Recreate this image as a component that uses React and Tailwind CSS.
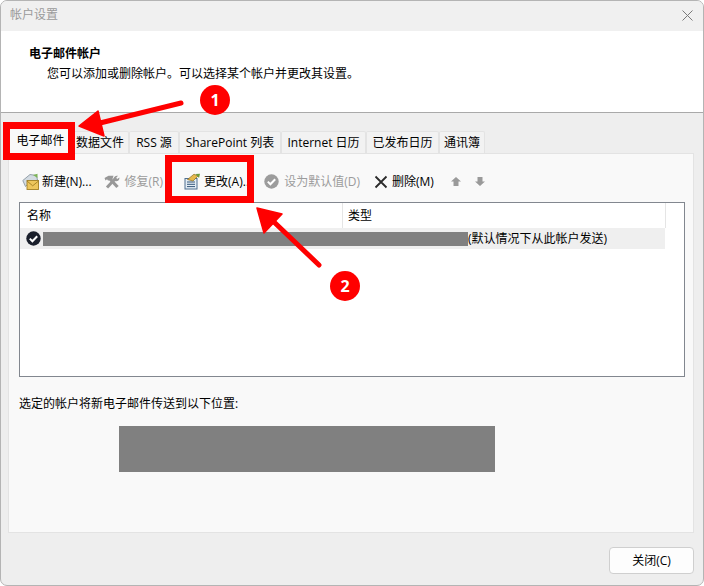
const tabs = [
  { label: "数据文件", w: "w-[58px]" },
  { label: "RSS 源", w: "w-[50px]" },
  { label: "SharePoint 列表", w: "w-[102px]" },
  { label: "Internet 日历", w: "w-[85px]" },
  { label: "已发布日历", w: "w-[73px]" },
  { label: "通讯簿", w: "w-[46px]" },
];

const MailIcon = () => (
  <svg width="17" height="17" viewBox="0 0 17 17">
    <path d="M.8 7.5 L8 1.5 L14.5 2.5 L15.5 7 L7 10 L3.5 13.5 Z" fill="#d3dbe2" stroke="#8b98a3" strokeWidth="0.9" />
    <path d="M11 2 L15.5 .8 L15.5 5 Z" fill="#7db356" />
    <rect x="5" y="7.5" width="11.5" height="9" fill="#eec65c" stroke="#a37f24" strokeWidth="0.9" />
    <path d="M5 8 L10.7 12.8 L16.5 8" fill="none" stroke="#a37f24" strokeWidth="0.9" />
  </svg>
);

const ToolsIcon = () => (
  <svg width="16" height="14" viewBox="0 0 16 14" fill="#989898">
    <path d="M.5 3 L4.5 .8 L9.5 .8 L8 5.5 L4 5.5 L3 4.2 L1.5 5.5 Z" />
    <path d="M6.5 4.5 L13.5 12" stroke="#989898" strokeWidth="3.2" />
    <path d="M3 12.5 L11 4" stroke="#989898" strokeWidth="3" />
    <path d="M9.5 4 C9.5 1.5 12 .2 14 .8 L12.2 2.8 L13.2 4 L15.4 2.4 C15.8 4.8 13.5 7 11 6 Z" />
  </svg>
);

const EditIcon = () => (
  <svg width="17" height="17" viewBox="0 0 17 17">
    <rect x="1" y="5.5" width="12" height="10.5" fill="#e4edf5" stroke="#4f6f8f" strokeWidth="1" />
    <path d="M3 9 H11 M3 11.3 H11 M3 13.6 H11" stroke="#35577a" strokeWidth="1" />
    <path d="M3.5 6.5 L10 1.2 L14 3 L9 8 Z" fill="#e7b94d" stroke="#8a6b1f" strokeWidth="0.7" />
    <path d="M11.5 1 L16 .8 L15 5 Z" fill="#6d9a3c" />
  </svg>
);

const CheckCircleIcon = ({ bg = "#9c9c9c" }) => (
  <svg width="15" height="15" viewBox="0 0 15 15">
    <circle cx="7.5" cy="7.5" r="7.2" fill={bg} />
    <path d="M3.8 7.6 L6.4 10.2 L11.2 5.2" fill="none" stroke="#fff" strokeWidth="2" />
  </svg>
);

const XIcon = () => (
  <svg width="14" height="14" viewBox="0 0 14 14">
    <path d="M1.5 1.5 L12.5 12.5 M12.5 1.5 L1.5 12.5" stroke="#2b2b2b" strokeWidth="1.8" />
  </svg>
);

const UpIcon = () => (
  <svg width="10" height="9" viewBox="0 0 10 9" fill="#9a9a9a">
    <path d="M5 0 L10 4.5 L7.5 4.5 L7.5 9 L2.5 9 L2.5 4.5 L0 4.5 Z" />
  </svg>
);

const DownIcon = () => (
  <svg width="10" height="9" viewBox="0 0 10 9" fill="#9a9a9a">
    <path d="M5 9 L10 4.5 L7.5 4.5 L7.5 0 L2.5 0 L2.5 4.5 L0 4.5 Z" />
  </svg>
);

const Badge = ({ n, className }) => (
  <div
    className={`absolute w-[30px] h-[30px] rounded-full bg-[#ff0000] text-white font-bold text-[16px] flex items-center justify-center ${className}`}
  >
    {n}
  </div>
);

const App = () => {
  return (
    <div
      className="relative w-[704px] h-[586px] overflow-hidden bg-white text-[12px] text-black"
      style={{ fontFamily: '"Open Sans", "Noto Sans CJK SC", sans-serif' }}
    >
      <div className="w-full h-full flex flex-col bg-[#eeeeee] border border-[#b4b4b4] rounded-t-[7px] rounded-b-[7px] overflow-hidden">
        {/* title bar */}
        <div className="h-[30px] shrink-0 bg-[#f0f0f0] flex items-center justify-between pl-[9px] pr-[10px] pb-[2px] text-[#9a9a9a]">
          <span>帐户设置</span>
          <svg width="11" height="11" viewBox="0 0 11 11">
            <path d="M.5 .5 L10.5 10.5 M10.5 .5 L.5 10.5" stroke="#7a7a7a" strokeWidth="1" />
          </svg>
        </div>

        {/* header */}
        <div className="h-[82px] shrink-0 bg-white border-b border-[#a9a9a9] pl-[28px] pt-[13px]">
          <div className="font-bold leading-[20px]">电子邮件帐户</div>
          <div className="pl-[18px] leading-[20px]">
            您可以添加或删除帐户。可以选择某个帐户并更改其设置。
          </div>
        </div>

        {/* tabs */}
        <div className="flex-1 flex flex-col pl-[7px] pr-[9px] pt-[17px]">
          <div className="flex items-end h-[23px] shrink-0 pl-[2px] relative z-10">
            <div className="w-[61px] h-[25px] bg-[#f9f9f9] flex items-center justify-center">
              电子邮件
            </div>
            {tabs.map((t) => (
              <div
                key={t.label}
                className={`${t.w} h-[22px] flex items-center justify-center bg-[#f2f2f2] border border-b-0 border-[#e3e3e3] rounded-t-[2px] whitespace-nowrap`}
              >
                {t.label}
              </div>
            ))}
          </div>

          {/* panel */}
          <div className="h-[380px] shrink-0 bg-[#f9f9f9] border border-[#e3e3e3] pl-[10px] flex flex-col">
            {/* toolbar */}
            <div className="h-[48px] shrink-0 flex items-center pl-[3px] pt-[7px] whitespace-nowrap">
              <MailIcon />
              <span className="ml-[3px]">新建(N)...</span>
              <span className="ml-[12px]"><ToolsIcon /></span>
              <span className="ml-[5px] text-[#9c9c9c]">修复(R)</span>
              <span className="ml-[21px]"><EditIcon /></span>
              <span className="ml-[3px]">更改(A)...</span>
              <span className="ml-[12px]"><CheckCircleIcon /></span>
              <span className="ml-[5px] text-[#9c9c9c]">设为默认值(D)</span>
              <span className="ml-[14px]"><XIcon /></span>
              <span className="ml-[4px]">删除(M)</span>
              <span className="ml-[17px]"><UpIcon /></span>
              <span className="ml-[14px]"><DownIcon /></span>
            </div>

            {/* list */}
            <div className="w-[666px] h-[175px] shrink-0 bg-white border border-[#82878f]">
              <div className="h-[25px] flex">
                <div className="w-[323px] border-r border-[#e5e5e5] pl-[7px] leading-[26px]">名称</div>
                <div className="w-[323px] border-r border-[#e5e5e5] pl-[5px] leading-[26px]">类型</div>
              </div>
              <div className="w-[645px] h-[21px] bg-[#efefef] flex items-center pl-[6px] whitespace-nowrap">
                <CheckCircleIcon bg="#1a1f2b" />
                <div className="ml-[2px] w-[425px] h-[14px] bg-[#808080]" />
                <span>(默认情况下从此帐户发送)</span>
              </div>
            </div>

            <div className="mt-[17px] leading-[20px]">选定的帐户将新电子邮件传送到以下位置:</div>
            <div className="ml-[100px] mt-[12px] w-[376px] h-[46px] bg-[#808080]" />
          </div>

          {/* footer */}
          <div className="flex justify-end mt-[14px]">
            <button className="w-[85px] h-[27px] bg-[#fdfdfd] border border-[#cfcfcf] rounded-[4px]">
              关闭(C)
            </button>
          </div>
        </div>
      </div>

      {/* annotations */}
      <div className="absolute left-[3px] top-[122px] w-[72px] h-[38px] border-[7px] border-[#ff0000] z-20" />
      <div className="absolute left-[165px] top-[155px] w-[89px] h-[48px] border-[7px] border-[#ff0000] z-20" />
      <svg className="absolute left-0 top-0 z-20" width="704" height="586" viewBox="0 0 704 586">
        <path d="M181 103 L100 123" stroke="#ff0000" strokeWidth="5" strokeLinecap="round" />
        <path d="M79 126 L98 111 L104 136 Z" fill="#ff0000" stroke="#ff0000" strokeWidth="1.5" strokeLinejoin="round" />
        <path d="M319 265 L274 222" stroke="#ff0000" strokeWidth="5" strokeLinecap="round" />
        <path d="M257 208 L282 214 L264 233 Z" fill="#ff0000" stroke="#ff0000" strokeWidth="1.5" strokeLinejoin="round" />
      </svg>
      <Badge n="1" className="left-[200px] top-[85px] z-20" />
      <Badge n="2" className="left-[330px] top-[271px] z-20" />
    </div>
  );
};

export default App;
